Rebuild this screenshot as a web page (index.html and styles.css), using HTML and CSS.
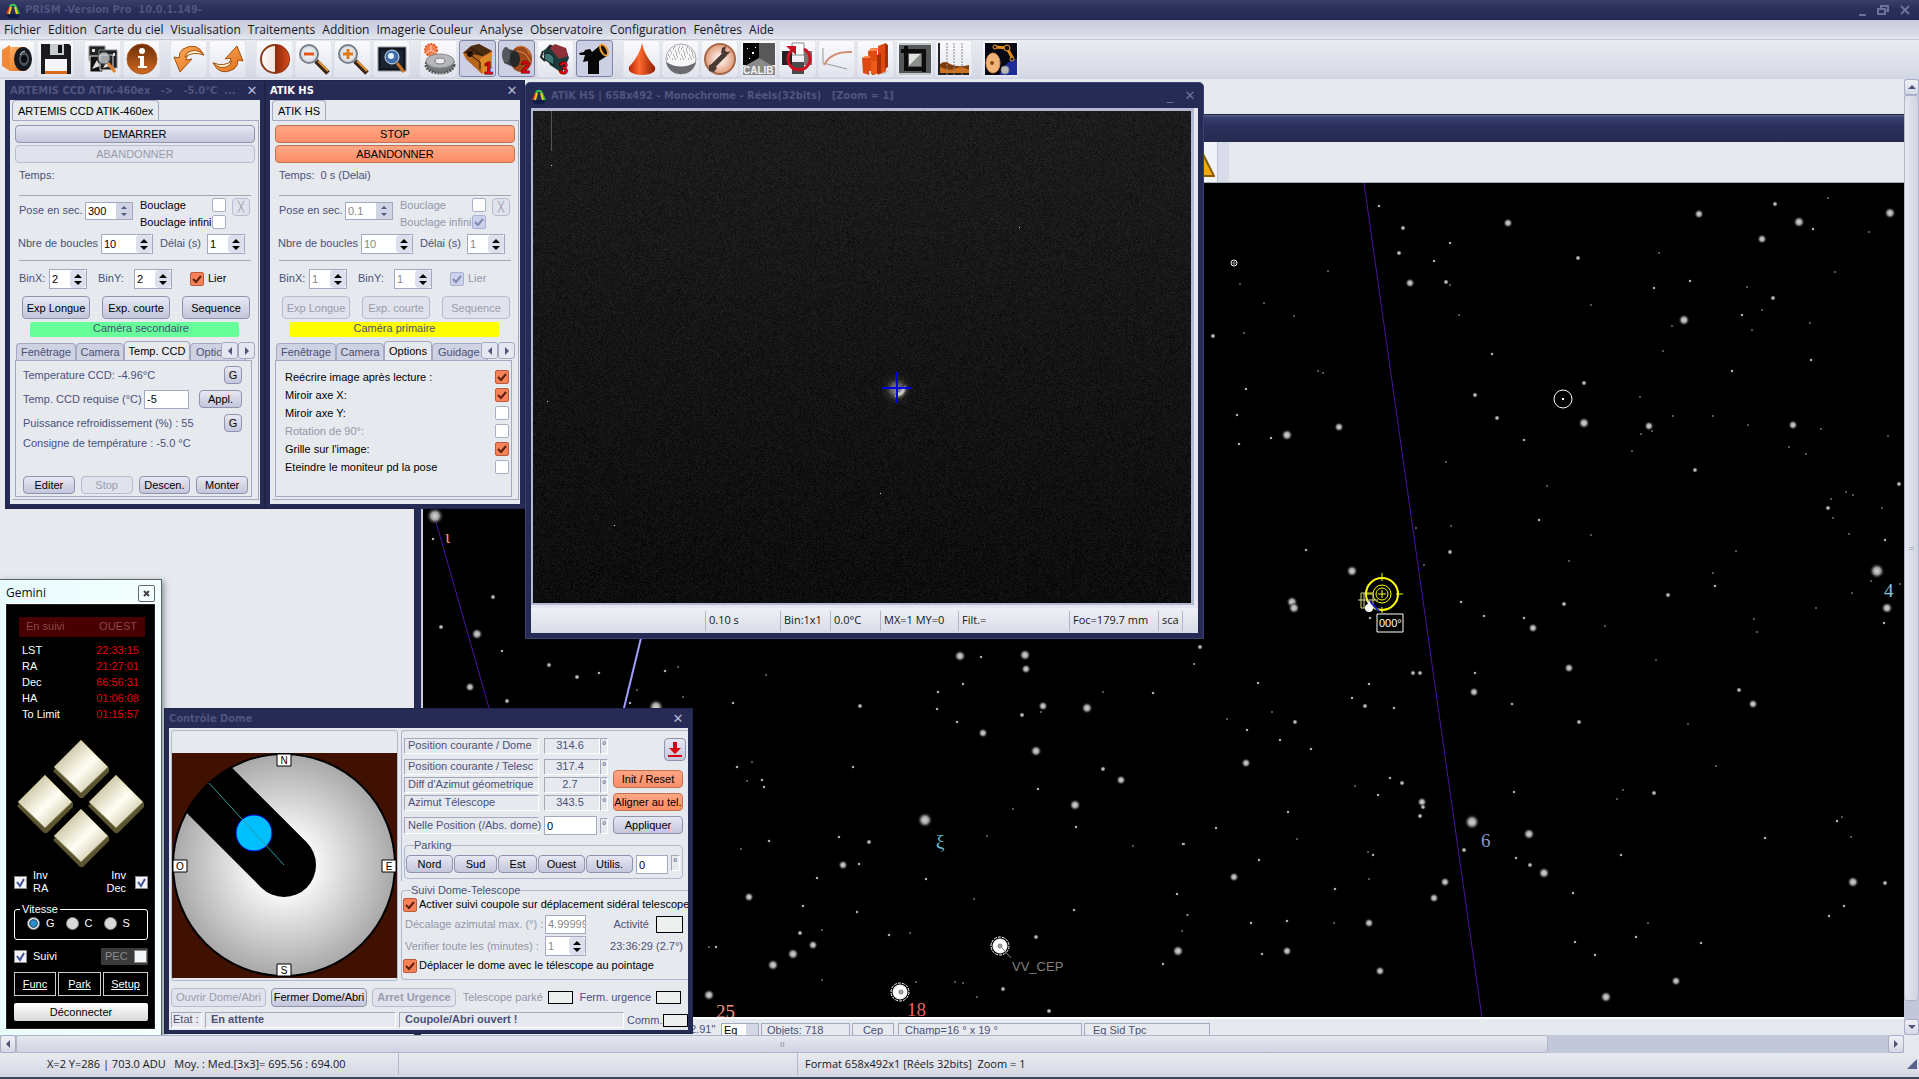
FILE: index.html
```html
<!DOCTYPE html>
<html lang="fr">
<head>
<meta charset="utf-8">
<title>PRISM -Version Pro 10.0.1.149-</title>
<link rel="stylesheet" href="styles.css">
</head>
<body>
<svg class="defs" aria-hidden="true">
  <defs>
    <linearGradient id="org" x1="0" y1="0" x2="1" y2="1"><stop offset="0" stop-color="#ffb066"/><stop offset="1" stop-color="#e06a10"/></linearGradient>
    <linearGradient id="brown" x1="0" y1="0" x2="0" y2="1"><stop offset="0" stop-color="#6b2c08"/><stop offset="1" stop-color="#d06a20"/></linearGradient>
    <linearGradient id="cone" x1="0" y1="0" x2="1" y2="0"><stop offset="0" stop-color="#b52400"/><stop offset=".4" stop-color="#ff6a30"/><stop offset="1" stop-color="#8d1d00"/></linearGradient>
    <linearGradient id="half" x1="0" y1="0" x2="1" y2="0"><stop offset="0" stop-color="#8a2a0c"/><stop offset="1" stop-color="#d8491a"/></linearGradient>
    <linearGradient id="halfl" x1="0" y1="0" x2="1" y2="0"><stop offset="0" stop-color="#fff"/><stop offset="1" stop-color="#e8c8bc"/></linearGradient>
    <radialGradient id="disc"><stop offset="0" stop-color="#fff"/><stop offset="1" stop-color="#e09a78"/></radialGradient>
    <radialGradient id="lens"><stop offset="0" stop-color="#fff"/><stop offset="1" stop-color="#cfd6dc"/></radialGradient>
    <symbol id="logo" viewBox="0 0 16 16">
      <path d="M1 12h14l-2 4H3z" fill="#101c4a"/>
      <path d="M2 12 5 5" stroke="#e03020" stroke-width="2"/><path d="M4 12 6 5" stroke="#f0d020" stroke-width="2"/>
      <path d="m14 12-3-7" stroke="#30b040" stroke-width="2"/><path d="m12 12-2-7" stroke="#e8d820" stroke-width="2"/>
      <path d="M5 5c1-3 5-3 6 0" fill="none" stroke="#3cc850" stroke-width="2"/>
    </symbol>
  </defs>
</svg>

<header class="titlebar">
  <svg class="logo"><use href="#logo"/></svg>
  <span class="title">PRISM -Version Pro&nbsp; 10.0.1.149-</span>
  <span class="wbtns">
    <button aria-label="Réduire"><svg width="8" height="12"><path d="M0 11h7" stroke="#6d7199" stroke-width="2"/></svg></button>
    <button aria-label="Restaurer"><svg width="12" height="12"><path d="M1 5h7v5H1zM4 5V2h7v5H8" fill="none" stroke="#6d7199" stroke-width="2"/></svg></button>
    <button aria-label="Fermer"><svg width="12" height="12"><path d="m2 2 8 8m0-8-8 8" stroke="#6d7199" stroke-width="2"/></svg></button>
  </span>
</header>
<nav class="menubar">
  <a href="#">Fichier</a><a href="#">Edition</a><a href="#">Carte du ciel</a><a href="#">Visualisation</a><a href="#">Traitements</a><a href="#">Addition</a><a href="#">Imagerie Couleur</a><a href="#">Analyse</a><a href="#">Observatoire</a><a href="#">Configuration</a><a href="#">Fenêtres</a><a href="#">Aide</a>
</nav>
<div class="toolbar">
  <div class="tgroup">
    <button aria-label="Ouvrir"><svg viewBox="0 0 32 32"><path d="M1 7 9 2v26l-8-5z" fill="#f08a3a"/><path d="M9 4h16v24H9z" fill="url(#org)"/><ellipse cx="22" cy="16" rx="9" ry="12" fill="#15181c"/><ellipse cx="23" cy="16" rx="5" ry="7" fill="#4b555c"/><ellipse cx="23" cy="16" rx="3" ry="4" fill="#0a0c0e"/><path d="M19 12q2-4 5-4" stroke="#cfd8dc" fill="none"/></svg></button>
    <button aria-label="Enregistrer"><svg viewBox="0 0 32 32"><path d="M1 1h28l2 2v28H1z" fill="#1b1b1d"/><path d="M10 1h14v11H10z" fill="#c8ccd2"/><path d="M18 2h4v8h-4z" fill="#111"/><path d="M5 16h22v13H5z" fill="#f4f5f7"/><path d="M5 28h22v3H5z" fill="#d86a18"/></svg></button>
  </div>
  <div class="tgroup">
    <button aria-label="Parcourir"><svg viewBox="0 0 32 32"><path d="M2 3h16v15H2z" fill="#222" stroke="#999"/><path d="M12 7h18v18H12z" fill="#1b1d20" stroke="#888"/><path d="M3 13h13v16H3z" fill="#111" stroke="#eee"/><path d="M13 12h13v15H13z" fill="#222" stroke="#ddd"/><path d="M5 6h3v3H5zM26 10h2v3h-2zM5 26l5-9 3 6zM16 25l4-7 4 5z" fill="#ddd"/><circle cx="17" cy="15" r="6" fill="#c9d4da" fill-opacity=".75" stroke="#555"/><path d="m21 20 7 9" stroke="#e08030" stroke-width="3"/></svg></button>
    <button aria-label="Informations"><svg viewBox="0 0 32 32"><circle cx="16" cy="16" r="15" fill="url(#brown)" stroke="#a8561c"/><circle cx="16" cy="8" r="3" fill="#fff"/><path d="M12 13h6v10h3v2H12v-2h2v-8h-2z" fill="#fff"/></svg></button>
  </div>
  <div class="tgroup">
    <button aria-label="Annuler"><svg viewBox="0 0 32 32"><path d="M31 12Q24-2 10 6q-4 3-4 9l-5-1 6 15 12-13-6 1q1-6 5-7 6-2 13 2z" fill="url(#org)" stroke="#a0520e"/><path d="M31 12q-8-8-17-2l-2 4q8-6 19-2z" fill="#fff0d8" stroke="#a0520e"/></svg></button>
    <button aria-label="Rétablir"><svg viewBox="0 0 32 32"><path d="M1 20q7 14 21 6 4-3 4-9l5 1-6-15-12 13 6-1q-1 6-5 7-6 2-13-2z" fill="url(#org)" stroke="#a0520e"/><path d="M1 20q8 8 17 2l2-4q-8 6-19 2z" fill="#fff0d8" stroke="#a0520e"/></svg></button>
  </div>
  <div class="tgroup">
    <button aria-label="Contraste"><svg viewBox="0 0 32 32"><circle cx="16" cy="16" r="14" fill="url(#halfl)" stroke="#8d3a18" stroke-width="2"/><path d="M16 2a14 14 0 0 1 0 28z" fill="url(#half)"/></svg></button>
    <button aria-label="Zoom arrière"><svg viewBox="0 0 32 32"><path d="m18 18 12 12" stroke="#3a2410" stroke-width="5"/><path d="m20 18 10 10" stroke="#e09030" stroke-width="2"/><circle cx="11" cy="11" r="9" fill="url(#lens)" stroke="#77808a" stroke-width="2"/><path d="M6 11h10" stroke="#e0561a" stroke-width="3"/></svg></button>
    <button aria-label="Zoom avant"><svg viewBox="0 0 32 32"><path d="m18 18 12 12" stroke="#3a2410" stroke-width="5"/><path d="m20 18 10 10" stroke="#e09030" stroke-width="2"/><circle cx="11" cy="11" r="9" fill="url(#lens)" stroke="#77808a" stroke-width="2"/><path d="M6 11h10M11 6v10" stroke="#e0761a" stroke-width="3"/></svg></button>
    <button aria-label="Zoom image"><svg viewBox="0 0 32 32"><path d="M2 4h28v24H2z" fill="#10151c" stroke="#8c94a0" stroke-width="1"/><path d="M5 7h22v18H5z" fill="#1a2430"/><circle cx="16" cy="14" r="7" fill="#3f6ea8" stroke="#d7e4f0"/><circle cx="15" cy="13" r="3" fill="#e9f4ff"/><path d="m21 20 7 9" stroke="#c87028" stroke-width="3"/></svg></button>
  </div>
  <div class="tgroup">
    <button aria-label="Monture"><svg viewBox="0 0 32 32"><circle cx="8" cy="7" r="6" fill="#f08050" stroke="#e05820" stroke-width="2" stroke-dasharray="2 1"/><path d="M8 7V2M8 7l5 3M8 7l-5 3" stroke="#fbd0b8"/><ellipse cx="17" cy="22" rx="14" ry="8" fill="#77797d" stroke="#55575b" stroke-width="3" stroke-dasharray="2 1"/><ellipse cx="17" cy="18" rx="14" ry="7" fill="#b4b6ba" stroke="#88898c"/><ellipse cx="17" cy="18" rx="5" ry="3" fill="#eee" stroke="#777"/></svg></button>
    <button class="on" aria-label="Caméra 1"><svg viewBox="0 0 32 32"><path d="m1 10 8-7 8-2 13 7v17l-10 6L4 16z" fill="#b8641a"/><path d="m1 10 8-7 8-2 13 7-9 5z" fill="#4b2c14"/><path d="m18 16 12-7v15l-10 7z" fill="#e08a26"/><path d="m4 9 14 10v7M9 5l12 8" stroke="#241206" fill="none"/><circle cx="8" cy="11" r="3" fill="#1d0f08"/><text x="22" y="31" class="num">1</text></svg></button>
    <button class="on" aria-label="Caméra 2"><svg viewBox="0 0 32 32"><ellipse cx="20" cy="16" rx="11" ry="13" fill="#a04a1c"/><path d="M15 4q10-4 14 8M13 9q12-3 16 10" stroke="#d88a50" fill="none"/><path d="m3 5 12 3v17L3 20z" fill="#3c3f43"/><ellipse cx="5" cy="12" rx="4" ry="8" fill="#55595d"/><ellipse cx="14" cy="16" rx="5" ry="8" fill="#26282b"/><text x="20" y="30" class="num">2</text></svg></button>
    <button aria-label="Caméra 3"><svg viewBox="0 0 32 32"><path d="m3 8 8-6 15 4 3 9-7 15-12-8z" fill="#1c3a3a"/><path d="m10 5 5-4 11 4 2 8-9 3z" fill="#8d3038"/><path d="M4 11q6-3 10 4v7l-9-5z" fill="#3e7674" stroke="#0e1c1c"/><path d="m3 8-2 6 4 4M11 2l-4 4" stroke="#222" fill="none" stroke-width="2"/><text x="19" y="31" class="num">3</text></svg></button>
    <button class="on" aria-label="Télescope"><svg viewBox="0 0 32 32"><path d="m0 10 5-1 1-2 5-1 2 3 10-8 6 5-1 7-8 5v13H9V18l-5 1 2-7H1z" fill="#070707"/><ellipse cx="25" cy="7" rx="3" ry="6" transform="rotate(-28 25 7)" fill="#1a1208" stroke="#f0a030" stroke-width="2"/></svg></button>
  </div>
  <div class="tgroup">
    <button aria-label="Profil"><svg viewBox="0 0 32 32"><path d="M16 0q2 12 13 24 2 7-13 8Q1 31 3 24 14 12 16 0z" fill="url(#cone)"/></svg></button>
    <button aria-label="Lune"><svg viewBox="0 0 32 32"><circle cx="16" cy="16" r="15" fill="#f6f6f7" stroke="#a8a8ac"/><path d="M1 19q15 9 30 0-3 12-15 12T1 19z" fill="#6c6c70"/><path d="M3 12h27M5 8h23M9 4h14M2 16h28M4 14h25M6 10h22M8 6h17" stroke="#777" stroke-dasharray="1 4 1 2"/></svg></button>
    <button aria-label="Outils"><svg viewBox="0 0 32 32"><circle cx="16" cy="16" r="15" fill="url(#disc)" stroke="#a86848" stroke-width="2"/><path d="m8 24 13-13" stroke="#4a3a34" stroke-width="5"/><path d="m27 8-5 5-5-3 1-5 4-2-1 5 3 1zM5 22l4-1 4 4-3 4-5-1z" fill="#4a3a34"/></svg></button>
    <button aria-label="Calibration"><svg viewBox="0 0 32 32"><path d="M0 0h16v22H0z" fill="#050505"/><path d="M16 0h16v22H16z" fill="#585858"/><path d="m0 24 16-9 16 9v8H0z" fill="#8a8a8a"/><path d="M4 5h1v1H4zM9 9h2v2H9zM6 15h1v1H6zM12 4h1v1h-1z" fill="#fff"/><text x="0" y="31" class="calib">CALIB</text></svg></button>
    <button aria-label="Rotation"><svg viewBox="0 0 32 32"><path d="M10 0h12v12H10z" fill="#fff" stroke="#888"/><path d="M10 19h12v12H10z" fill="#4a4a4a"/><path d="M0 8h10v14H0z" fill="#222"/><path d="M22 8h8v14h-8z" fill="#777"/><path d="M12 6a11 11 0 1 0 10 0" fill="none" stroke="#cc1020" stroke-width="3"/><path d="M4 3h10v9z" fill="#cc1020"/></svg></button>
    <button aria-label="Courbe"><svg viewBox="0 0 32 32"><path d="M2 5v15l24 6" fill="none" stroke="#999"/><path d="M3 22Q10 8 31 9" fill="none" stroke="#d49074" stroke-width="2"/></svg></button>
    <button aria-label="Histogramme"><svg viewBox="0 0 32 32"><path d="m5 31 24-3-5 3z" fill="#bbb"/><path d="M2 15h7v17l-6-2zM8 8h9v20H9zM18 3l8-3v28l-8 4z" fill="#dd4a10"/><path d="m17 12 4-2v20l-9 2V20l5-2zM25 0l3 2v22l-3 2z" fill="#a83008"/><path d="M11 18h6v13h-6z" fill="#ee5a18"/><path d="m2 15 3-2h6l-2 2zM8 8l3-3h8l-2 3z" fill="#ff8850"/></svg></button>
    <button aria-label="Recadrer"><svg viewBox="0 0 32 32"><path d="M0 0h32v32H0z" fill="#555859"/><path d="M0 1h32M0 31h32" stroke="#c4c6c6" stroke-width="2"/><path d="M5 3h4v21h18v4H5z" fill="#0d0d0d"/><path d="M2 6h25v23h-4V10H2z" fill="#0d0d0d"/><path d="M10 11h12L10 23z" fill="#e0e2de"/><path d="M22 11v12H10z" fill="#8c9088"/></svg></button>
    <button aria-label="Coupe"><svg viewBox="0 0 32 32"><path d="M2 21q5-4 10 0 8 4 19 1v9H2z" fill="#7c3c0c"/><path d="M2 24q10 5 17 1 6-2 12 2v4H2z" fill="#d0701c"/><path d="M1 0v31h30" fill="none" stroke="#222" stroke-width="2"/><path d="M9 0v32M16 0v32M24 0v32" stroke="#888" stroke-dasharray="2 1"/></svg></button>
  </div>
  <div class="tgroup">
    <button aria-label="Automatisation"><svg viewBox="0 0 32 32"><path d="M0 0h32v32H0z" fill="#060814"/><path d="M14 32q8-16 18-16v16z" fill="#1e2c9a"/><path d="m10 4 12 1 6 11" fill="none" stroke="#e08a18" stroke-width="3"/><circle cx="10" cy="4" r="2" fill="#111" stroke="#f0a030"/><circle cx="22" cy="5" r="3" fill="#111" stroke="#f0a030"/><circle cx="27" cy="16" r="2" fill="#111" stroke="#f0a030"/><ellipse cx="8" cy="20" rx="7" ry="10" fill="#f0b478" stroke="#d08a50"/><circle cx="7" cy="20" r="2" fill="#8a4a1a"/><circle cx="20" cy="27" r="4" fill="#b8b8b8" stroke="#888"/></svg></button>
  </div>
</div>

<main class="workspace">
  <div class="desk">

    <section class="win chart" aria-label="Carte du ciel">
      <div class="chart-title"></div>
      <div class="chart-tools"><div class="strip"><span class="tool"><svg width="30" height="32"><path d="M1 30 15 2l14 28z" fill="#f5a810" stroke="#8a5a00" stroke-width="2"/></svg></span></div></div>
      <div class="skybox">
        <svg class="sky" id="sky" viewBox="423 183 1481 835" width="1481" height="835">
          <defs>
            <radialGradient id="star"><stop offset="0" stop-color="#d8d8d8"/><stop offset=".45" stop-color="#a0a0a0"/><stop offset="1" stop-color="#000" stop-opacity="0"/></radialGradient>
          </defs>
          <g fill="none">
            <path d="M1364 183 1482 1018" stroke="#4a14a0" />
            <path d="M434 515 489 708" stroke="#4a14a0"/>
            <path d="M641 638 624 708" stroke="#a0a0ff" stroke-width="2"/>
          </g>
          <g id="stars"></g>
          <g fill="none" stroke="#fff">
            <circle cx="1234" cy="263" r="3"/><path d="M1231 263h6M1234 260v6" stroke="#888"/>
            <circle cx="1563" cy="399" r="9"/>
            <circle cx="1000" cy="946" r="9" stroke-dasharray="3 1"/><circle cx="1000" cy="946" r="7" fill="#fff"/><circle cx="1000" cy="946" r="2" fill="#aaa" stroke="#777"/><path d="m1002 948 9 10" stroke="#888"/>
            <circle cx="900" cy="992" r="9" stroke-dasharray="3 1"/><circle cx="900" cy="992" r="7" fill="#fff"/><circle cx="901" cy="992" r="2" fill="#aaa" stroke="#777"/>
          </g>
          <path d="M1562 398h2v2h-2z" fill="#fff"/>
          <g fill="none" stroke="#ff0">
            <circle cx="1382" cy="594" r="16" stroke-width="2"/><circle cx="1382" cy="594" r="9"/><circle cx="1382" cy="594" r="6"/>
            <path d="M1382 573v8M1382 607v6M1396 594h7M1366 594h6M1382 590v8M1378 594h8"/>
            <path d="M1361 593h12v15h-12zM1364 593v15M1358 600h20" stroke="#d8d890"/>
            <path d="m1369 601 10 10" stroke="#2020d0" stroke-width="2"/>
          </g>
          <path d="m1369 600 4 9-6-2z" fill="#fff"/><circle cx="1369" cy="608" r="4" fill="#fff"/>
          <path d="M1377 614h26v18h-26z" fill="#000" stroke="#fff"/>
          <text x="1379" y="627" fill="#fff" font-size="11">000°</text>
          <g class="names">
            <text x="445" y="543" fill="#f09070">ι</text>
            <text x="936" y="848" fill="#60c0d0">ξ</text>
            <text x="1481" y="847" fill="#8898d0">6</text>
            <text x="1884" y="597" fill="#80c8d8">4</text>
            <text x="907" y="1016" fill="#f06060">18</text>
            <text x="716" y="1018" fill="#f09080">25</text>
          </g>
          <text x="1012" y="971" fill="#808080" font-size="13">VV_CEP</text>
        </svg>
      </div>
      <div class="chart-info">
        <span class="c0">2.91"</span><span class="c1"><input aria-label="Repère" value="Eq"><i></i></span><span class="c2">Objets: 718</span><span class="c3">Cep</span><span class="c4">Champ=16 ° x 19 °</span><span class="c5">Eq Sid Tpc</span>
      </div>
    </section>

    <section class="win cam cam-a">
      <h2><span>ARTEMIS CCD ATIK-460ex&nbsp;&nbsp; -&gt;&nbsp;&nbsp; -5.0°C&nbsp; ...</span><button aria-label="Fermer">✕</button></h2>
      <div class="body">
        <div class="toptab">ARTEMIS CCD ATIK-460ex</div>
        <div class="page">
          <button class="btn wide">DEMARRER</button>
          <button class="btn wide" disabled>ABANDONNER</button>
          <p class="time">Temps:</p>
          <div class="pose">
            <label for="a1">Pose en sec.</label>
            <span class="spin flat"><input id="a1" value="300"><i></i></span>
            <span class="loops">
              <label class="ink">Bouclage<input type="checkbox"></label>
              <label class="ink">Bouclage infini<input type="checkbox"></label>
            </span>
            <button class="btn x" disabled>╳</button>
          </div>
          <div class="count">
            <label for="a2">Nbre de boucles</label><span class="spin"><input id="a2" value="10"><i></i></span>
            <label for="a3">Délai (s)</label><span class="spin"><input id="a3" value="1"><i></i></span>
          </div>
          <div class="bin">
            <label for="a4">BinX:</label><span class="spin"><input id="a4" value="2"><i></i></span>
            <label for="a5">BinY:</label><span class="spin"><input id="a5" value="2"><i></i></span>
            <label class="ink tie"><input type="checkbox" checked>Lier</label>
          </div>
          <div class="three"><button class="btn">Exp Longue</button><button class="btn">Exp. courte</button><button class="btn">Sequence</button></div>
          <div class="role green">Caméra secondaire</div>
          <div class="tabs t-a"><button>Fenêtrage</button><button>Camera</button><button class="cur">Temp. CCD</button><button class="cut">Options</button><span class="arrows"><button aria-label="Précédent"><i class="lt"></i></button><button aria-label="Suivant"><i class="rt"></i></button></span></div>
          <div class="sub temp">
            <div class="trow"><span>Temperature CCD: -4.96°C</span><button class="btn g">G</button></div>
            <div class="trow"><label for="a6">Temp. CCD requise (°C)</label><input id="a6" class="field" value="-5"><button class="btn appl">Appl.</button></div>
            <div class="trow"><span>Puissance refroidissement (%) : 55</span><button class="btn g">G</button></div>
            <div class="trow last"><span>Consigne de température : -5.0 °C</span></div>
            <div class="four"><button class="btn">Editer</button><button class="btn" disabled>Stop</button><button class="btn">Descen.</button><button class="btn">Monter</button></div>
          </div>
        </div>
      </div>
    </section>

    <section class="win cam cam-b">
      <h2 class="active"><span>ATIK HS</span><button aria-label="Fermer">✕</button></h2>
      <div class="body">
        <div class="toptab">ATIK HS</div>
        <div class="page">
          <button class="btn wide hot">STOP</button>
          <button class="btn wide hot">ABANDONNER</button>
          <p class="time">Temps:&nbsp; 0 s (Delai)</p>
          <div class="pose">
            <label for="b1">Pose en sec.</label>
            <span class="spin flat"><input id="b1" value="0.1" disabled><i></i></span>
            <span class="loops">
              <label class="dim">Bouclage<input type="checkbox"></label>
              <label class="dim">Bouclage infini<input type="checkbox" checked disabled></label>
            </span>
            <button class="btn x" disabled>╳</button>
          </div>
          <div class="count">
            <label for="b2">Nbre de boucles</label><span class="spin"><input id="b2" value="10" disabled><i></i></span>
            <label for="b3">Délai (s)</label><span class="spin"><input id="b3" value="1" disabled><i></i></span>
          </div>
          <div class="bin">
            <label for="b4">BinX:</label><span class="spin"><input id="b4" value="1" disabled><i></i></span>
            <label for="b5">BinY:</label><span class="spin"><input id="b5" value="1" disabled><i></i></span>
            <label class="dim tie"><input type="checkbox" checked disabled>Lier</label>
          </div>
          <div class="three"><button class="btn" disabled>Exp Longue</button><button class="btn" disabled>Exp. courte</button><button class="btn" disabled>Sequence</button></div>
          <div class="role yellow">Caméra primaire</div>
          <div class="tabs t-b"><button>Fenêtrage</button><button>Camera</button><button class="cur">Options</button><button class="cut">Guidage</button><span class="arrows"><button aria-label="Précédent"><i class="lt"></i></button><button aria-label="Suivant"><i class="rt"></i></button></span></div>
          <div class="sub opts">
            <label>Reécrire image après lecture :<input type="checkbox" checked></label>
            <label>Miroir axe X:<input type="checkbox" checked></label>
            <label>Miroir axe Y:<input type="checkbox"></label>
            <label class="dim">Rotation de 90°:<input type="checkbox"></label>
            <label>Grille sur l'image:<input type="checkbox" checked></label>
            <label>Eteindre le moniteur pd la pose<input type="checkbox"></label>
          </div>
        </div>
      </div>
    </section>

    <section class="win image">
      <h2><svg class="logo"><use href="#logo"/></svg><span>ATIK HS | 658x492 - Monochrome - Réels(32bits)&nbsp;&nbsp; [Zoom = 1]</span><button aria-label="Réduire">_</button><button aria-label="Fermer">✕</button></h2>
      <div class="frame">
        <canvas id="ccd" width="658" height="492"></canvas>
        <svg class="mark" viewBox="0 0 30 32" width="30" height="32"><path d="M15 0v31M0 16h30" stroke="#0000e0" stroke-width="2"/></svg>
      </div>
      <div class="imgstat"><span></span><span>0.10 s</span><span>Bin:1x1</span><span>0.0°C</span><span>MX=1 MY=0</span><span>Filt.=</span><span>Foc=179.7 mm</span><span>sca</span><span></span></div>
    </section>

    <section class="gemini">
      <header><span>Gemini</span><button aria-label="Fermer"><svg width="7" height="7"><path d="m1 1 5 5m0-5L1 6" stroke="#444" stroke-width="2"/></svg></button></header>
      <div class="pad">
        <div class="state"><span>En suivi</span><span>OUEST</span></div>
        <dl>
          <dt>LST</dt><dd>22:33:15</dd><dt>RA</dt><dd>21:27:01</dd><dt>Dec</dt><dd>66:56:31</dd><dt>HA</dt><dd>01:06:08</dd><dt>To Limit</dt><dd>01:15:57</dd>
        </dl>
        <svg class="keys" viewBox="0 0 130 130" width="130" height="130">
          <defs>
            <linearGradient id="key" x1="0" y1="0" x2="1" y2="1"><stop offset="0" stop-color="#a8a070"/><stop offset=".45" stop-color="#f2efdf"/><stop offset=".55" stop-color="#fffef4"/><stop offset="1" stop-color="#b4ac80"/></linearGradient>
            <g id="k"><path d="M0-28 28 0v4L2 30h-3l-27-27z" fill="#5a5430"/><path d="M0-28 27-1 0 25-27-1z" fill="url(#key)" stroke="#8c8558"/></g>
          </defs>
          <use href="#k" x="65" y="29"/><use href="#k" x="29" y="64"/><use href="#k" x="100" y="64"/><use href="#k" x="65" y="98"/>
        </svg>
        <div class="inv"><label><input type="checkbox" checked>Inv<br>RA</label><label class="r">Inv<br>Dec<input type="checkbox" checked></label></div>
        <fieldset><legend>Vitesse</legend><label><input type="radio" name="v" checked>G</label><label><input type="radio" name="v">C</label><label><input type="radio" name="v">S</label></fieldset>
        <div class="track"><label><input type="checkbox" checked>Suivi</label><label class="pec">PEC<input type="checkbox"></label></div>
        <div class="cmds"><button>Func</button><button>Park</button><button>Setup</button></div>
        <button class="off">Déconnecter</button>
      </div>
    </section>

    <section class="win dome">
      <h2><span>Contrôle Dome</span><button aria-label="Fermer">✕</button></h2>
      <div class="dbody">
        <div class="upper">
          <div class="plan">
            <svg viewBox="0 0 225 225" width="225" height="225">
              <defs><radialGradient id="dg" cx=".5" cy=".5" r=".5"><stop offset=".2" stop-color="#fff"/><stop offset="1" stop-color="#a8a8a8"/></radialGradient><clipPath id="dc"><circle cx="112" cy="112" r="111"/></clipPath></defs>
              <path d="M0 0h225v225H0z" fill="#401000"/>
              <circle cx="112" cy="112" r="111" fill="url(#dg)"/>
              <path d="M112 112 12 12" stroke="#000" stroke-width="64" stroke-linecap="round" clip-path="url(#dc)"/>
              <circle cx="112" cy="112" r="111" fill="none" stroke="#000" stroke-width="2"/>
              <circle cx="82" cy="80" r="18" fill="#00bfff" stroke="#0000e0" stroke-width="1"/>
              <path d="M37 30 112 112" stroke="#2a9a9a"/>
              <g fill="#fff" stroke="#000"><path d="M105 1h14v12h-14zM1 107h14v12H1zM210 107h14v12h-14zM105 211h14v12h-14z"/></g>
              <g font-size="10" text-anchor="middle" fill="#000"><text x="112" y="11">N</text><text x="8" y="117">O</text><text x="217" y="117">E</text><text x="112" y="221">S</text></g>
            </svg>
          </div>
          <div class="ctl">
            <div class="box1">
              <div class="read r0"><b>Position courante / Dome</b><b class="v">314.6</b><b>°</b><button class="btn dl" aria-label="Rentrer"><svg width="16" height="16"><path d="M6 1h4v6h4l-6 6-6-6h4zM1 14h14v2H1z" fill="#d80010"/></svg></button></div>
              <div class="read"><b>Position courante / Telesc</b><b class="v">317.4</b><b>°</b></div>
              <div class="read"><b>Diff d'Azimut géometrique</b><b class="v">2.7</b><b>°</b></div>
              <div class="read"><b>Azimut Télescope</b><b class="v">343.5</b><b>°</b></div>
              <div class="read r4"><label for="np">Nelle Position (/Abs. dome)</label><input id="np" class="field" value="0"><b>°</b></div>
              <div class="acts"><button class="btn hot">Init / Reset</button><button class="btn hot">Aligner au tel.</button><button class="btn">Appliquer</button></div>
              <fieldset class="park"><legend>Parking</legend><button class="btn">Nord</button><button class="btn">Sud</button><button class="btn">Est</button><button class="btn">Ouest</button><button class="btn">Utilis.</button><input class="field" aria-label="Azimut de parking" value="0"><b>°</b></fieldset>
            </div>
            <fieldset class="follow"><legend>Suivi Dome-Telescope</legend>
              <label class="ink"><input type="checkbox" checked>Activer suivi coupole sur déplacement sidéral telescope</label>
              <div class="frow"><label for="dz" class="dim">Décalage azimutal max. (°) :</label><input id="dz" class="field" value="4.99999" disabled><span class="act">Activité<i class="lamp"></i></span></div>
              <div class="frow"><label for="vm" class="dim">Verifier toute les (minutes) :</label><span class="spin"><input id="vm" value="1" disabled><i></i></span><span class="act">23:36:29 (2.7°)</span></div>
              <label class="ink"><input type="checkbox" checked>Déplacer le dome avec le télescope au pointage</label>
            </fieldset>
          </div>
        </div>
        <div class="dbtns"><button class="btn" disabled>Ouvrir Dome/Abri</button><button class="btn">Fermer Dome/Abri</button><button class="btn strong" disabled>Arret Urgence</button><span class="dim">Telescope parké</span><i class="lamp"></i><span>Ferm. urgence</span><i class="lamp"></i></div>
        <div class="dstat"><b>Etat :</b><b class="s">En attente</b><b class="s">Coupole/Abri ouvert !</b><span>Comm.</span><i class="lamp"></i></div>
      </div>
    </section>
  </div>
  <div class="vbar"><button aria-label="Monter"><i class="up"></i></button><div class="thumb">=</div><div class="rest"></div><button aria-label="Descendre"><i class="dn"></i></button></div>
  <div class="hbar"><button aria-label="Gauche"><i class="lt"></i></button><div class="thumb">ıı</div><div class="rest"></div><button aria-label="Droite"><i class="rt"></i></button></div>
</main>
<footer class="status"><span>X=2 Y=286 | 703.0 ADU&nbsp;&nbsp; Moy. : Med.[3x3]= 695.56 : 694.00</span><span></span><span>Format 658x492x1 [Réels 32bits]&nbsp; Zoom = 1</span><svg width="10" height="10"><path d="M10 0v10H0z" fill="#56618f"/></svg></footer>
<script src="app.js"></script>
</body>
</html>
```
FILE: styles.css
```css
* { box-sizing: border-box; }
body { margin: 0; min-height: 100vh; height: 100vh; display: flex; flex-direction: column; overflow: hidden; font: 11px/13px "Liberation Sans", Arial, sans-serif; color: #4a5078; background: #e6eaef; }
button, input { font: inherit; color: inherit; margin: 0; padding: 0; }
button { border: 0; background: none; white-space: nowrap; }
i { font-style: normal; }
b { font-weight: normal; }
p, h2, dl, dd { margin: 0; }
.defs { position: absolute; width: 0; height: 0; }
.logo { width: 16px; height: 16px; flex: none; }

/* application frame */
.titlebar { height: 20px; flex: none; display: flex; align-items: center; gap: 4px; padding: 0 8px 0 5px; background: linear-gradient(#3a3f6a, #2b2f5c 40%, #262b55); }
.title, h2 { font: bold 11px/16px "DejaVu Sans Condensed", "DejaVu Sans", sans-serif; color: #50547e; }
.wbtns { margin-left: auto; display: flex; gap: 10px; }
.wbtns button { display: flex; }
.menubar { height: 20px; flex: none; display: flex; align-items: center; gap: 7px; padding-left: 4px; background: linear-gradient(#c9cadf, #d6dae5 70%, #e4e7ee); border-bottom: 1px solid #c4c8d4; }
.menubar a { font: 12px/18px "Open Sans", "Noto Sans", sans-serif; color: #16161c; text-decoration: none; white-space: nowrap; }
.toolbar { height: 39px; flex: none; display: flex; align-items: flex-start; gap: 10px; margin-left: -2px; background: linear-gradient(#e9ebf0, #dde0ea 60%, #d2d6e4); }
.tgroup { display: flex; gap: 2px; }
.tgroup button { width: 37px; height: 37px; display: flex; align-items: center; justify-content: center; border: 1px solid #e4e6ee; border-radius: 3px; background: linear-gradient(#fbfbfd, #eceef4 60%, #e2e4ee); }
.tgroup button.on { background: #ccd0e2; border-color: #8085a8; }
.tgroup svg { width: 32px; height: 32px; flex: none; overflow: visible; }
.num { font: bold 16px "Liberation Sans", sans-serif; fill: #e00010; stroke: #400; stroke-width: 1px; paint-order: stroke; }
.calib { font: bold 10px "Liberation Sans", sans-serif; fill: #f4f4f4; }

.workspace { flex: 1; min-height: 0; display: grid; grid-template: minmax(0, 1fr) 18px / minmax(0, 1fr) 15px; }
.desk { position: relative; overflow: hidden; background: #e6eaef; }
.vbar, .hbar { display: flex; background: #c3c7da; color: #8c90ac; }
.vbar { flex-direction: column; }
.vbar button, .hbar button { width: 16px; height: 16px; flex: none; display: flex; align-items: center; justify-content: center; border: 1px solid #a9adc6; border-radius: 3px; background: linear-gradient(#f0f1f6, #d6d9e6); }
.vbar button { width: 15px; }
.hbar button { height: 18px; }
.thumb { flex: 906; display: flex; align-items: center; justify-content: center; border: 1px solid #b0b4ca; border-radius: 3px; background: linear-gradient(90deg, #e6e8f0, #d0d3e2); font-size: 9px; line-height: 9px; }
.hbar .thumb { flex: 1532; background: linear-gradient(#e6e8f0, #d0d3e2); }
.vbar .rest { flex: 18; }
.hbar .rest { flex: 340; }
.up, .dn, .lt, .rt { width: 0; height: 0; border: 4px solid transparent; }
.up { border-top: 0; border-bottom-color: #50557c; }
.dn { border-bottom: 0; border-top-color: #50557c; }
.lt { border-left: 0; border-right-color: #50557c; }
.rt { border-right: 0; border-left-color: #50557c; }
.status { height: 26px; flex: none; display: flex; align-items: center; padding: 0 2px 2px 47px; background: linear-gradient(#e8eaf0, #d4d8e2); border-bottom: 2px solid #3c4858; font: 11px/16px "Open Sans", "Noto Sans", sans-serif; color: #16161c; }
.status span { white-space: nowrap; }
.status span:first-child { width: 351px; }
.status span:nth-child(2) { width: 400px; height: 22px; border: solid #b4b8cc; border-width: 0 1px; }
.status span:nth-child(3) { padding-left: 7px; }
.status svg { margin-left: auto; }

/* floating windows on the desktop */
.win { position: absolute; background: #262b55; border: 1px solid #1f2448; }
.win h2 { display: flex; align-items: center; gap: 4px; white-space: nowrap; }
.win h2 span { flex: 1; white-space: nowrap; }
.win h2 button { width: 16px; font: 13px/16px "DejaVu Sans", sans-serif; color: #b4b8d4; }
.btn { height: 18px; display: block; padding: 0 2px; border: 1px solid #8f93ae; border-radius: 4px; background: linear-gradient(#e6e8f2, #d6d8e8 45%, #c4c6dc); color: #000; text-align: center; line-height: 14px; }
.btn.hot { background: linear-gradient(#ffa684, #fc8e68); border-color: #c87050; }
.btn:disabled { background: #e0e2ec; border-color: #b8bcd0; color: #9a9cac; }
.win h2.active { color: #fff; }
.field, .spin { border: 1px solid #a4a8c0; background: #fff; }
.field { width: 48px; height: 19px; padding-left: 2px; color: #000; }
.field:disabled { color: #888; }
.spin { height: 20px; display: flex; align-items: center; }
.spin input { flex: 1; min-width: 0; width: 10px; height: 16px; padding-left: 2px; border: 0; background: none; color: #000; }
.spin input:disabled { color: #888; }
.spin i { width: 16px; height: 18px; flex: none; border-radius: 4px; background: url("data:image/svg+xml,%3Csvg xmlns='http://www.w3.org/2000/svg' width='16' height='18'%3E%3Cpath d='M4 8h8L8 4zM4 11h8l-4 4z' fill='%23000'/%3E%3C/svg%3E") center no-repeat #dde0ec; }
.spin.flat i { height: 16px; border-radius: 0; background-color: #d0d4e4; background-image: url("data:image/svg+xml,%3Csvg xmlns='http://www.w3.org/2000/svg' width='16' height='18'%3E%3Cpath d='M5 7h6L8 4zM5 11h6l-3 3z' fill='%23565c88'/%3E%3C/svg%3E"); }
.ink { color: #000; }
.dim { color: #9296a8; }
input[type=checkbox] { appearance: none; width: 14px; height: 14px; flex: none; border: 1px solid #a9aec8; border-radius: 2px; background: #fff center no-repeat; }
input[type=checkbox]:checked { border-color: #b85c40; background-color: #f88258; background-image: url("data:image/svg+xml,%3Csvg xmlns='http://www.w3.org/2000/svg' width='12' height='12'%3E%3Cpath d='m2 6 3 3 5-6' fill='none' stroke='%235c2010' stroke-width='2'/%3E%3C/svg%3E"); }
input[type=checkbox]:checked:disabled { border-color: #a9b0d4; background-color: #ccd2ea; background-image: url("data:image/svg+xml,%3Csvg xmlns='http://www.w3.org/2000/svg' width='12' height='12'%3E%3Cpath d='m2 6 3 3 5-6' fill='none' stroke='%238088b4' stroke-width='2'/%3E%3C/svg%3E"); }
.lamp { width: 27px; height: 17px; flex: none; border: 1px solid #000; background: #edefee; }

/* camera panels */
.cam { top: 1px; width: 260px; padding: 0 4px 4px; }
.cam-a { left: 5px; }
.cam-b { left: 265px; }
.cam h2 { height: 19px; }
.body { background: #e6eaef; padding: 0 1px 4px 2px; }
.toptab { width: fit-content; height: 20px; padding: 3px 5px; border: 1px solid #a4a8c0; border-bottom: 0; border-radius: 4px 4px 0 0; color: #000; line-height: 14px; }
.page { border: 1px solid #a4a8c0; border-left-color: #e6eaef; padding: 4px 3px 2px 2px; display: flex; flex-direction: column; }
.wide { margin-bottom: 2px; }
.time { height: 30px; padding: 4px 4px 0; }
.pose, .count, .bin { padding-left: 3px; display: grid; align-items: center; white-space: nowrap; }
.pose { height: 34px; margin: 0 4px; padding: 2px 0 0; border-top: 1px solid #a4a8b4; grid-template-columns: 66px 48px 7px 86px 6px 18px; align-items: start; }
.pose > label { padding-top: 6px; }
.pose .spin { height: 18px; margin-top: 4px; }
.pose .loops { grid-column: 4; display: flex; flex-direction: column; gap: 3px; }
.loops label { height: 14px; display: flex; justify-content: space-between; align-items: center; }
.pose .btn { grid-column: 6; height: 18px; font-size: 10px; }
.count { height: 29px; margin-bottom: 2px; grid-template-columns: 83px 52px 54px 38px; }
.count label:nth-of-type(2) { padding-left: 7px; }
.bin { height: 36px; margin: 0 4px; padding: 0; border-top: 1px solid #a4a8b4; grid-template-columns: 30px 38px 47px 38px 18px auto; }
.bin label:nth-of-type(2) { padding-left: 11px; }
.bin .tie { grid-column: 6; display: flex; align-items: center; gap: 4px; }
.three { display: flex; gap: 12px; padding-left: 7px; }
.three .btn { width: 68px; height: 23px; }
.role { width: 209px; height: 15px; margin: 3px 0 4px 15px; border-radius: 2px; text-align: center; }
.green { padding-left: 13px; background: #66ff99; }
.yellow { background: #ffff00; }
.tabs { position: relative; height: 19px; display: flex; align-items: flex-end; overflow: hidden; }
.tabs > button { height: 17px; border: 1px solid #a4a8c0; border-bottom: 0; border-radius: 4px 4px 0 0; background: #cfd2e2; flex: none; }
.tabs > button:nth-child(1) { width: 60px; margin-left: 1px; }
.tabs > button:nth-child(2) { width: 48px; }
.tabs > .cur { height: 19px; background: #e6eaef; color: #000; }
.t-a > .cur { width: 66px; }
.t-b > .cur { width: 48px; }
.tabs > .cut { width: 56px; padding-left: 5px; text-align: left; }
.arrows { position: absolute; right: 0; top: 1px; display: flex; background: #e6eaef; }
.arrows button { width: 17px; height: 17px; display: flex; align-items: center; justify-content: center; border: 1px solid #a4a8c0; border-radius: 3px; background: #e4e6f0; }
.sub { height: 137px; margin-right: 3px; border: 1px solid #a4a8c0; }
.temp { padding: 2px 3px 2px 7px; display: flex; flex-direction: column; }
.trow { height: 24px; padding-right: 6px; display: flex; align-items: center; white-space: nowrap; }
.trow > label { width: 121px; }
.trow .field { width: 45px; }
.trow .g { width: 18px; margin-left: auto; }
.appl { width: 43px; margin-left: auto; }
.trow.last { height: 17px; }
.four { margin-top: auto; display: flex; gap: 6px; }
.four .btn { width: 53px; }
.opts { padding: 7px 2px 0 9px; color: #000; }
.opts label { height: 18px; display: flex; justify-content: space-between; align-items: center; }

/* CCD image window */
.image { left: 525px; top: 3px; width: 679px; padding: 0 5px 5px; border-radius: 5px 5px 0 0; border-color: #3c4274; }
.image h2 { height: 25px; }
.image h2 button { color: #6d7199; }
.frame { position: relative; padding: 3px 2px 2px; border-right: 4px solid #e6e6f0; border-bottom: 3px solid #e6e6f0; background: #b4b8d0; }
.frame canvas { display: block; }
.mark { position: absolute; left: 351px; top: 264px; }
.imgstat { height: 25px; display: grid; grid-template-columns: 174px 75px 50px 50px 78px 111px 89px 24px auto; align-items: center; background: linear-gradient(#eef0f5, #d8dce6); font: 11px/18px "Open Sans", "Noto Sans", sans-serif; color: #16161c; white-space: nowrap; }
.imgstat span { height: 20px; padding-left: 3px; border-left: 1px solid #b0b4c8; }
.imgstat span:first-child { border: 0; }

/* sky chart */
.chart { left: 414px; right: 0; top: 35px; bottom: 0; border-width: 1px 0 0 1px; padding-left: 6px; display: flex; flex-direction: column; }
.chart-title { height: 27px; flex: none; background: linear-gradient(#5a6084, #384070 10%, #2b2f5c 40%, #262b50); }
.chart-tools { height: 41px; flex: none; background: #e6eaef; border-bottom: 1px solid #a4b0b8; }
.strip { width: 808px; height: 40px; padding-right: 11px; display: flex; justify-content: flex-end; background: #d8dbe8; }
.tool { width: 37px; padding: 4px 4px; background: #f2f3f8; border-right: 1px solid #c0c4d8; }
.skybox { flex: 1; min-height: 0; overflow: hidden; background: #000; border-left: 2px solid #c8cce0; }
.sky { display: block; font-family: "Liberation Sans", sans-serif; }
.names { font: 19px "Liberation Serif", serif; }
.chart-info { height: 18px; flex: none; display: flex; padding: 4px 0 0 265px; overflow: hidden; background: #e6eaef; border-top: 2px solid #fff; white-space: nowrap; }
.chart-info span { height: 16px; border: 1px solid #a4a8c0; border-width: 1px 1px 0 1px; flex: none; line-height: 13px; }
.chart-info .c0 { border: 0; width: 35px; padding-left: 4px; }
.chart-info .c1 { width: 38px; display: flex; background: #fff; color: #000; }
.c1 input { width: 24px; height: 13px; border: 0; padding-left: 2px; background: none; }
.c1 i { width: 12px; background: #d4d7e6; }
.chart-info .c2 { width: 89px; margin-left: 2px; padding-left: 5px; }
.chart-info .c3 { width: 42px; margin-left: 2px; text-align: center; }
.chart-info .c4 { width: 184px; margin-left: 4px; padding-left: 6px; }
.chart-info .c5 { width: 126px; margin-left: 2px; padding-left: 8px; }

/* Gemini hand controller */
.gemini { position: absolute; left: -1px; top: 500px; width: 163px; height: 457px; padding: 2px 6px 6px; border: 1px solid #566; background: linear-gradient(90deg, #e8fbfb, #f4ffff); box-shadow: 2px 2px 6px #888c98; color: #fff; display: flex; flex-direction: column; }
.gemini header { height: 22px; flex: none; display: flex; align-items: center; justify-content: space-between; color: #111; font: 12px/16px "Open Sans", "Noto Sans", sans-serif; }
.gemini header button { width: 17px; height: 17px; display: flex; align-items: center; justify-content: center; border: 1px solid #667; border-radius: 2px; }
.pad { flex: 1; min-height: 0; padding: 12px 6px 5px 7px; border: 1px solid #222; outline: 1px solid #fff; background: #000; display: flex; flex-direction: column; }
.state { height: 20px; flex: none; margin: 0 3px 5px 5px; padding: 0 8px 0 7px; display: flex; justify-content: space-between; background: #480000; color: #8c4848; line-height: 19px; }
.pad dl { margin: 0 9px 0 8px; display: grid; grid-template-columns: auto auto; justify-content: space-between; line-height: 16px; }
.pad dd { color: #e00010; text-align: right; }
.keys { flex: none; margin: 17px 0 0 2px; }
.gemini input { appearance: none; width: 13px; height: 13px; flex: none; border: 1px solid #888; border-radius: 0; background-color: #f2f4f8; }
.gemini input[type=checkbox]:checked { border-color: #888; background-color: #f2f4f8; background-image: url("data:image/svg+xml,%3Csvg xmlns='http://www.w3.org/2000/svg' width='11' height='11'%3E%3Cpath d='m2 5 3 4 4-7' fill='none' stroke='%23405098' stroke-width='2'/%3E%3C/svg%3E"); }
.gemini label { display: flex; align-items: center; gap: 6px; }
.inv { display: flex; justify-content: space-between; line-height: 13px; }
.inv .r { text-align: right; gap: 9px; }
.gemini fieldset { margin: 8px 0 0; height: 37px; padding: 1px 12px 0; border: 1px solid #fff; border-radius: 3px; display: flex; gap: 11px; align-items: center; }
.gemini legend { padding: 0 2px; margin-left: -7px; }
.gemini input[type=radio] { border-radius: 50%; background: #d8d8d8; }
.gemini input[type=radio]:checked { background: radial-gradient(#2a90c8 35%, #1c4a68 50%, #eee 60%); }
.track { height: 17px; margin: 8px 0 7px; display: flex; justify-content: space-between; }
.pec { width: 47px; padding-left: 4px; background: #3a3a3a; color: #8c8c8c; }
.cmds { display: grid; grid-template-columns: 42px 43px 1fr; gap: 2px; }
.cmds button { height: 24px; border: 1px solid #ccc; text-decoration: underline; }
.off { height: 18px; margin-top: 7px; background: linear-gradient(#fff, #d8d8d8); border-radius: 2px; color: #000; }

/* dome control */
.dome { left: 164px; top: 629px; width: 529px; height: 326px; padding: 0 4px 4px; }
.dome h2 { height: 19px; padding-right: 2px; }
.dbody { width: 519px; height: 302px; overflow: hidden; background: #e6eaef; padding: 2px 0 0 2px; }
.upper { display: flex; gap: 3px; }
.plan { width: 227px; height: 251px; padding: 22px 0 0; border: 1px solid #b0b8d0; border-radius: 3px; }
.plan svg { display: block; }
.ctl { flex: 1; min-width: 0; }
.box1 { position: relative; height: 151px; padding: 7px 0 0 2px; border: 1px solid #b0b8d0; border-width: 1px 0 0 1px; border-radius: 3px 0 0; }
.read { height: 18px; display: grid; grid-template-columns: 135px 5px 56px 8px 56px 22px; align-items: center; white-space: nowrap; }
.read b, .park b, .dstat b { height: 16px; padding-left: 3px; border: 1px solid; border-color: #a4a8b8 #fff #fff #a4a8b8; }
.read b:nth-child(3), .park b { padding-left: 1px; }
.read label { padding-left: 3px; line-height: 15px; border: 1px solid; border-color: #a4a8b8 #fff #fff #a4a8b8; }
.read > :nth-child(2) { grid-column: 3; }
.read .v { padding: 0 4px 0 0; text-align: center; }
.read .dl { grid-column: 6; height: 23px; width: 22px; padding: 2px; }
.r0 { margin-bottom: 2px; align-items: start; }
.r4 { margin-top: 4px; }
.read .field { width: 53px; }
.acts { position: absolute; left: 211px; top: 39px; width: 70px; display: grid; gap: 5px; }
.acts .btn { padding: 0; }
.park { position: relative; height: 40px; margin: 5px 5px 0 0; padding: 4px 1px 0; border: 1px solid #b0b8d0; border-radius: 4px; display: flex; gap: 1px; align-items: flex-start; }
.park legend, .follow legend { padding: 0; margin-left: 8px; line-height: 12px; }
.park .btn { width: 47px; }
.park .btn:nth-of-type(2) { width: 43px; }
.park .btn:nth-of-type(3) { width: 39px; }
.park .field { width: 32px; margin: 0 2px; }
.park b { width: 9px; }
.follow { min-width: 0; height: 96px; margin: 3px 0 0; padding: 0 0 0 1px; border: 1px solid #b0b8d0; border-right: 0; border-radius: 4px 0 0 4px; white-space: nowrap; }
.follow > label { height: 17px; display: flex; align-items: center; gap: 2px; }
.frow { height: 22px; padding-left: 2px; display: grid; grid-template-columns: 140px 41px 1fr; align-items: center; }
.frow .field { width: 41px; }
.act { height: 18px; display: flex; align-items: center; justify-content: flex-end; gap: 7px; padding-right: 5px; }
.dbtns { height: 20px; margin-top: 6px; display: grid; grid-template-columns: 95px 96px 84px auto 25px auto 25px; column-gap: 5px; align-items: center; white-space: nowrap; padding-right: 7px; }
.dbtns .lamp, .dstat .lamp { width: 25px; height: 13px; }
.dbtns .btn { height: 19px; padding: 0; }
.strong { font-weight: bold; }
.dbtns span { text-align: right; }
.dstat { margin-top: 5px; display: grid; grid-template-columns: 31px 191px 225px 33px 25px; column-gap: 3px; align-items: center; white-space: nowrap; }
.dstat .s { font-weight: bold; padding-left: 5px; }
.dstat b { padding-left: 1px; }
.dstat span { text-align: right; }
```
FILE: app.js
```js
// Star plates: origin and scale of each plate, then x,y,magnitude class (1 = faintest).
const plates = [
  { x: 1180, y: 60, sx: 2.122, sy: 3, s: "422,437,2 474,505,3 695,488,4 1102,463,4 1263,433,3 1376,415,1 1314,487,5 1506,458,5 1344,508,2 1236,538,4 1461,517,1 573,550,2 465,580,3 538,604,2 845,595,3 1017,580,1 1389,637,1 315,634,1 489,670,4 565,667,3 574,676,1 128,673,1 1005,685,2 1083,664,2 1204,682,1 1259,715,3 179,730,1 241,769,1 591,766,1 873,736,1 1236,751,1 1193,766,2 1069,781,5 1045,799,1 1213,811,1 1336,790,1 135,820,1 69,829,3 663,883,2 1024,874,1 1338,901,2 1172,934,2 292,934,1 304,940,1 139,988,2 625,1006,3 858,970,3 120,1066,2 673,1075,3 857,1090,5 977,1012,1 1047,1069,1 1130,1069,1 995,1099,4 1002,1114,1 979,1123,1 1206,1096,1 1300,1095,4 1361,1108,1 1503,1129,1 337,1102,4 228,1126,5 194,1135,2 126,1153,2 731,1141,2 960,1174,1 1293,1162,1 1329,1183,1 565,1207,1 1093,1231,3 778,1279,1 1414,1297,1 1429,1306,1 1382,1318,1 1526,1273,3 1374,1345,3 1490,1345,1 1385,1375,1 761,1381,2 576,1399,1 873,1426,1 1420,1423,1 1497,1440,2 268,1471,2 572,1477,3 1179,1474,1 500,1405,1" },
  { x: 1180, y: 540, sx: 2.122, sy: 2.909, s: "364,91,5 237,181,5 241,198,5 404,226,2 517,74,1 597,181,2 646,222,2 729,226,2 750,255,4 814,187,3 826,62,1 1130,97,1 1136,135,2 1036,161,3 1350,199,1 1427,155,1 901,251,1 1217,231,1 1225,269,1 1478,90,6 1467,120,1 1527,129,1 1501,199,5 1493,240,2 43,310,3 29,362,1 495,388,3 510,388,3 627,388,2 624,443,4 402,420,2 166,417,2 366,461,2 393,484,3 455,490,2 705,478,2 826,371,4 847,528,3 1011,348,1 1187,437,3 1215,478,4 1077,536,1 1138,656,1 99,522,1 196,501,1 243,528,3 143,554,2 213,583,2 279,609,2 140,649,4 446,691,2 472,708,3 421,741,2 514,763,4 516,776,3 510,804,3 372,717,1 230,790,2 77,837,2 8,885,2 249,871,1 168,932,2 398,909,1 410,915,2 620,819,6 741,854,5 708,732,2 603,903,3 714,926,2 743,944,3 773,968,5 939,726,1 928,754,1 1005,737,3 1395,816,2 1404,807,1 1423,865,1 1242,868,2 935,917,2 1429,994,5 1497,999,3 1408,1066,2 1378,1095,2 114,979,4 328,1014,2 400,987,1 563,995,4 540,1040,4 835,1028,2 16,1092,1 150,1115,2 228,1109,2 326,1115,1 400,1113,4 994,1115,1 968,1156,2 1106,1171,2 839,1168,2 880,1208,2 173,1203,2 228,1197,4 424,1255,4 904,1329,5 1052,1282,4" },
  { x: 520, y: 560, sx: 2.24, sy: 3, s: "64,316,3 128,352,3 178,340,2 325,334,2 354,322,1 552,346,1 366,412,1 247,430,2 304,440,6 263,391,1 476,430,2 985,289,5 1032,292,2 1132,284,5 1134,328,4 993,373,2 937,397,2 933,448,2 762,439,3 1125,466,3 1172,439,4 1168,457,1 1270,445,5 1307,397,1 1419,400,2 1509,313,1 978,487,2 1036,520,4 1155,574,5 1307,628,3 1347,660,4 1160,688,2 1104,748,1 1244,736,5 1246,802,2 1486,853,2 1374,859,1 1045,829,1 487,622,2 520,607,1 541,660,2 509,664,1 547,682,2 747,622,2 908,779,6 715,832,2 782,847,3 723,916,4 760,913,2 557,844,2 496,868,1 666,955,2 514,1010,4 634,1039,2 755,1057,2 910,958,2 1016,1018,1 1242,1051,2 1472,1003,2 1495,1066,1 1482,1114,1 628,1120,3 657,1155,4 612,1181,5 566,1216,5 677,1111,1 827,1126,2 873,1120,1 1156,1131,3 1475,1172,5 1441,1213,2 424,1161,1 438,1162,2 677,1261,1 888,1267,1 975,1267,1 993,1270,1 1024,1312,1 1083,1288,3 1186,1354,3 423,1304,5" },
  { x: 400, y: 490, sx: 3, sy: 3, s: "104,77,7 100,148,2 280,322,3 124,412,3 231,433,5 307,484,2 211,592,4 321,633,3" }
];
const radius = [0, 1, 2, 3, 5, 6, 8, 9];
const NS = "http://www.w3.org/2000/svg";
const group = document.getElementById("stars");
for (const p of plates) {
  for (const item of p.s.split(" ")) {
    const [x, y, m] = item.split(",").map(Number);
    const c = document.createElementNS(NS, "circle");
    c.setAttribute("cx", Math.round(p.x + x / p.sx));
    c.setAttribute("cy", Math.round(p.y + y / p.sy));
    c.setAttribute("r", m === 1 ? 0.8 : radius[m]);
    c.setAttribute("fill", m === 1 ? "#c0c0c0" : "url(#star)");
    group.appendChild(c);
  }
}

// Noisy CCD frame with one defocused star.
const ctx = document.getElementById("ccd").getContext("2d");
const W = 658, H = 492;
const frame = ctx.createImageData(W, H);
let seed = 7;
const rnd = () => (seed = (seed * 16807) % 2147483647) / 2147483647;
for (let y = 0; y < H; y++) {
  for (let x = 0; x < W; x++) {
    const k = (y * W + x) * 4;
    const d = Math.hypot(x - 363, y - 278);
    const ring = Math.hypot(x - 364, y - 277);
    const glow = 110 * Math.exp(-d * d / 60) + 130 * Math.exp(-((ring - 6) ** 2) / 5) * (x + y > 645 ? 1 : 0.1);
    const v = 28 - 15 * (y / H) + (rnd() + rnd() - 1) * 13 + glow;
    frame.data[k] = frame.data[k + 1] = frame.data[k + 2] = v;
    frame.data[k + 3] = 255;
  }
}
ctx.putImageData(frame, 0, 0);
ctx.fillStyle = "#555";
ctx.fillRect(18, 0, 1, 40);
ctx.fillStyle = "#ccc";
for (const [x, y] of [[18, 54], [81, 414], [486, 116], [347, 382], [14, 290]]) ctx.fillRect(x, y, 1, 1);
```
